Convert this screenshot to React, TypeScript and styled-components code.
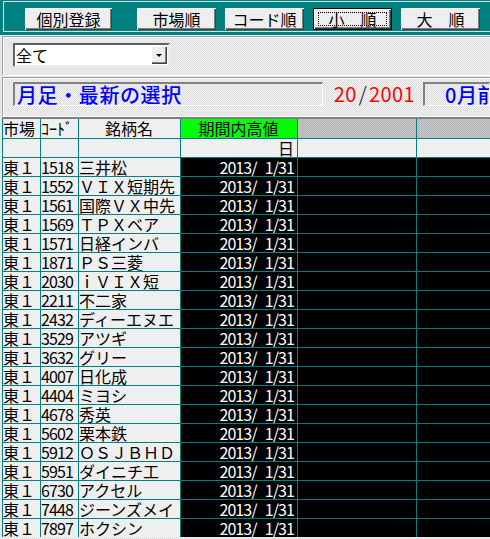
import { createGlobalStyle, css, styled } from 'styled-components';

const dither = (a: string, b: string) => css`
  background-color: ${a};
  background-image: repeating-conic-gradient(${a} 0 25%, ${b} 0 50%);
  background-size: 2px 2px;
`;

const GlobalStyle = createGlobalStyle`
  html, body {
    margin: 0;
    padding: 0;
  }
  body {
    width: 490px;
    height: 539px;
    overflow: hidden;
    font-family: "Noto Sans CJK JP", "Noto Sans", sans-serif;
    ${dither('#f2f2f2', '#dedede')}
  }
`;

const Toolbar = styled.div`
  box-sizing: border-box;
  height: 35px;
  padding: 1px 0 3px 3px;
  background: #008080;
`;

const ToolbarFrame = styled.div`
  box-sizing: border-box;
  height: 100%;
  display: flex;
  align-items: flex-start;
  gap: 9px;
  padding: 6px 0 0 21px;
  border: 1px solid #cfe0e0;
  border-right: none;
`;

const ToolButton = styled.button<{ $w: number; $lead?: boolean; $default?: boolean }>`
  position: relative;
  box-sizing: border-box;
  width: ${(p) => p.$w}px;
  height: 22px;
  margin: 0 ${(p) => (p.$lead ? 16 : 0)}px 0 0;
  padding: 0;
  border: none;
  font-family: "Noto Sans CJK JP", sans-serif;
  font-size: 16px;
  line-height: 20px;
  color: #000;
  ${dither('#f6f6f6', '#e6e6e6')}
  box-shadow:
    inset 1px 1px #ffffff,
    inset -1px -1px #404040,
    inset -2px -2px #808080;
  ${(p) =>
    p.$default &&
    css`
      box-shadow:
        inset 0 0 0 1px #000,
        inset 2px 2px #ffffff,
        inset -2px -2px #404040,
        inset -3px -3px #808080;
      &::after {
        content: '';
        position: absolute;
        inset: 4px 5px 4px 5px;
        border: 1px dotted #000;
      }
    `}
`;

const Panel = styled.div`
  box-sizing: border-box;
  height: 40px;
  margin: 1px 0 0 2px;
  border-top: 1px solid #a0a0a0;
  border-left: 1px solid #a0a0a0;
  border-bottom: 1px solid #ffffff;
  box-shadow: inset 1px 1px #ffffff;
`;

const ComboPanel = styled(Panel)`
  padding: 6px 0 0 10px;
`;

const InfoPanel = styled(Panel)`
  display: flex;
  align-items: flex-start;
  padding: 4px 0 0 10px;
`;

const Combo = styled.div`
  box-sizing: border-box;
  width: 157px;
  height: 24px;
  display: flex;
  align-items: center;
  background: #fff;
  border-top: 2px solid #606060;
  border-left: 2px solid #606060;
  border-bottom: 2px solid #ececec;
  border-right: 2px solid #ececec;
  font-size: 16px;
  line-height: 20px;
`;

const ComboText = styled.span`
  flex: 1;
  padding-left: 1px;
`;

const ComboArrow = styled.span`
  box-sizing: border-box;
  width: 16px;
  height: 18px;
  margin-right: 1px;
  display: flex;
  align-items: center;
  justify-content: center;
  ${dither('#f6f6f6', '#e6e6e6')}
  box-shadow:
    inset 1px 1px #ffffff,
    inset -1px -1px #404040,
    inset -2px -2px #808080;
  &::before {
    content: '';
    border-left: 3px solid transparent;
    border-right: 3px solid transparent;
    border-top: 3px solid #000;
  }
`;

const SunkenBox = styled.div<{ $w?: number; $indent?: number }>`
  box-sizing: border-box;
  height: 24px;
  ${(p) => (p.$w ? `width: ${p.$w}px;` : 'flex: 1;')}
  display: flex;
  align-items: center;
  padding-left: ${(p) => p.$indent ?? 2}px;
  border-top: 2px solid #808080;
  border-left: 2px solid #808080;
  border-bottom: 1px solid #ffffff;
  border-right: 1px solid #ffffff;
  overflow: hidden;
  white-space: nowrap;
`;

const BlueText = styled.span`
  color: #0000ff;
  font-size: 20px;
  line-height: 22px;
  letter-spacing: 0.6px;
  font-weight: 500;
`;

const DateLabel = styled.div`
  box-sizing: border-box;
  width: 100px;
  padding-right: 8px;
  text-align: right;
  font-size: 20px;
  line-height: 24px;
  letter-spacing: 0.4px;
  color: #ff0000;
`;

const Slash = styled.span`
  color: #000;
  margin: 0 2px;
  font-weight: 300;
`;

const Sheet = styled.div`
  display: grid;
  grid-template-columns: 37px 37px 101px 116px 118px 1fr;
  grid-template-rows: 19px;
  grid-auto-rows: 18px;
  gap: 1px;
  margin: 0 0 0 2px;
  padding-left: 1px;
  border-top: 2px solid #808080;
  background: #008080;
`;

type Tone = 'light' | 'green' | 'gray' | 'dark';

const Cell = styled.div<{ $tone?: Tone; $align?: 'left' | 'center' | 'right'; $num?: boolean }>`
  box-sizing: border-box;
  overflow: hidden;
  white-space: pre;
  font-size: 16px;
  line-height: 18px;
  padding: 0 ${(p) => (p.$align === 'right' ? 3 : 1)}px 0 ${(p) => (p.$align === 'left' ? 2 : 0)}px;
  text-align: ${(p) => p.$align ?? 'left'};
  letter-spacing: ${(p) => (p.$num ? '-0.9px' : '0')};
  color: ${(p) => (p.$tone === 'dark' ? '#fff' : '#000')};
  ${(p) => {
    switch (p.$tone) {
      case 'green':
        return css`background: #00ff00;`;
      case 'gray':
        return dither('#c8c8c8', '#b4b4b4');
      case 'dark':
        return css`background: #000;`;
      default:
        return dither('#f6f6f6', '#e8e8e8');
    }
  }}
`;

const rows: [string, string][] = [
  ['1518', '三井松'],
  ['1552', 'ＶＩＸ短期先'],
  ['1561', '国際ＶＸ中先'],
  ['1569', 'ＴＰＸベア'],
  ['1571', '日経インバ'],
  ['1871', 'ＰＳ三菱'],
  ['2030', 'ｉＶＩＸ短'],
  ['2211', '不二家'],
  ['2432', 'ディーエヌエ'],
  ['3529', 'アツギ'],
  ['3632', 'グリー'],
  ['4007', '日化成'],
  ['4404', 'ミヨシ'],
  ['4678', '秀英'],
  ['5602', '栗本鉄'],
  ['5912', 'ＯＳＪＢＨＤ'],
  ['5951', 'ダイニチ工'],
  ['6730', 'アクセル'],
  ['7448', 'ジーンズメイ'],
  ['7897', 'ホクシン'],
];

export default function App() {
  return (
    <>
      <GlobalStyle />
      <Toolbar>
        <ToolbarFrame>
          <ToolButton $w={87} $lead>個別登録</ToolButton>
          <ToolButton $w={79}>市場順</ToolButton>
          <ToolButton $w={79}>コード順</ToolButton>
          <ToolButton $w={79} $default>小　順</ToolButton>
          <ToolButton $w={79}>大　順</ToolButton>
        </ToolbarFrame>
      </Toolbar>

      <ComboPanel>
        <Combo>
          <ComboText>全て</ComboText>
          <ComboArrow />
        </Combo>
      </ComboPanel>

      <InfoPanel>
        <SunkenBox $w={310}>
          <BlueText>月足・最新の選択</BlueText>
        </SunkenBox>
        <DateLabel>
          20<Slash>/</Slash>2001
        </DateLabel>
        <SunkenBox $indent={20}>
          <BlueText>0月前</BlueText>
        </SunkenBox>
      </InfoPanel>

      <Sheet>
        <Cell>市場</Cell>
        <Cell>ｺｰﾄﾞ</Cell>
        <Cell $align="center">銘柄名</Cell>
        <Cell $tone="green" $align="center">期間内高値</Cell>
        <Cell $tone="gray" />
        <Cell $tone="gray" />

        <Cell />
        <Cell />
        <Cell />
        <Cell $align="right">日</Cell>
        <Cell />
        <Cell />

        {rows.map(([code, name]) => (
          <>
            <Cell key={code + 'm'}>東１</Cell>
            <Cell key={code + 'c'} $num>{code}</Cell>
            <Cell key={code + 'n'}>{name}</Cell>
            <Cell key={code + 'd'} $tone="dark" $align="right" $num>{'2013/\u20071/31'}</Cell>
            <Cell key={code + 'e'} $tone="dark" />
            <Cell key={code + 'f'} $tone="dark" />
          </>
        ))}
      </Sheet>
    </>
  );
}
